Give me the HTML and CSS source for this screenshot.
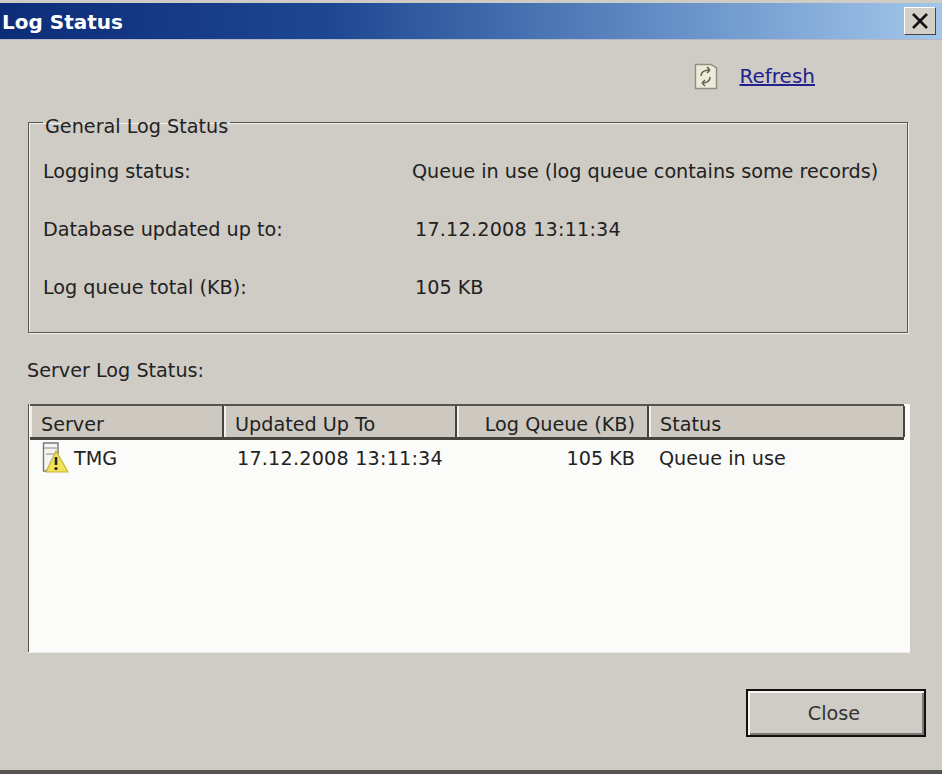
FILE: index.html
```html
<!DOCTYPE html>
<html lang="en">
<head>
  <meta charset="UTF-8">
  <title>Log Status</title>
  <link rel="stylesheet" href="styles.css">
</head>
<body>
  <div class="dialog">
    <div class="titlebar">
      <span class="title">Log Status</span>
      <button class="close-x" aria-label="Close">
        <svg width="18" height="16" viewBox="0 0 18 16"><path d="M2 1 L16 15 M16 1 L2 15" stroke="#111" stroke-width="2.6" fill="none"/></svg>
      </button>
    </div>

    <div class="toolbar">
      <svg class="refresh-icon" width="24" height="27" viewBox="0 0 24 27">
        <path d="M1.5 1.5 H17 L22.5 5 V25.5 H1.5 Z" fill="#ecebd8" stroke="#8f8f80" stroke-width="1.4"/>
        <path d="M7 13 C7 8 11 7 16 7 M16 7 L13 4 M16 7 L13 10" stroke="#5d6250" stroke-width="1.5" fill="none"/>
        <path d="M16 14 C16 19 12 20 8 20 M8 20 L11 17 M8 20 L11 23" stroke="#5d6250" stroke-width="1.5" fill="none"/>
      </svg>
      <a class="refresh-link" href="#">Refresh</a>
    </div>

    <fieldset class="group">
      <legend>General Log Status</legend>
      <div class="status-grid">
        <span>Logging status:</span>
        <span>Queue in use (log queue contains some records)</span>
        <span>Database updated up to:</span>
        <span class="val date">17.12.2008 13:11:34</span>
        <span>Log queue total (KB):</span>
        <span class="val">105 KB</span>
      </div>
    </fieldset>

    <div class="section-label">Server Log Status:</div>

    <div class="list">
      <div class="list-head">
        <div class="col col-server">Server</div>
        <div class="col col-updated">Updated Up To</div>
        <div class="col col-queue">Log Queue (KB)</div>
        <div class="col col-status">Status</div>
      </div>
      <div class="list-row">
        <div class="cell cell-server">
          <svg width="27" height="32" viewBox="0 0 27 32">
            <path d="M1.5 1 H16 V12 L8 29 H1.5 Z" fill="#f4f4f0" stroke="#77777a" stroke-width="1.4"/>
            <path d="M2 6 H15 M4 12 H13" stroke="#8a8a8a" stroke-width="1.2"/>
            <path d="M14 9 L26 30 H4 Z" fill="#f1e25a" stroke="#c4b23c" stroke-width="1.2"/>
            <path d="M14 15 V23" stroke="#2a2410" stroke-width="2.6"/>
            <circle cx="14" cy="26.5" r="1.6" fill="#2a2410"/>
          </svg>
          <span>TMG</span>
        </div>
        <div class="cell cell-updated date">17.12.2008 13:11:34</div>
        <div class="cell cell-queue">105 KB</div>
        <div class="cell cell-status">Queue in use</div>
      </div>
    </div>

    <div class="footer">
      <button class="close-btn">Close</button>
    </div>
  </div>
</body>
</html>
```

FILE: styles.css
```css
* {
  margin: 0;
  padding: 0;
  box-sizing: border-box;
}

body {
  background: #cfcbc5;
  font-family: "DejaVu Sans", sans-serif;
  font-size: 19.2px;
  color: #222;
  overflow: hidden;
}

.dialog {
  display: flex;
  flex-direction: column;
  width: 942px;
  height: 774px;
  padding-top: 3px;
  border-bottom: 4px solid #55544f;
  background: #cfcbc5;
}

.titlebar {
  display: flex;
  align-items: center;
  justify-content: space-between;
  flex-shrink: 0;
  height: 37px;
  padding: 0 6px 0 2px;
  background: linear-gradient(90deg, #0d2c78 0%, #1e4792 35%, #6d97cc 75%, #a4c6ea 100%);
  border-bottom: 1px solid #b5b8c4;
}

.title {
  padding-top: 2px;
  color: #fff;
  font-size: 20px;
  font-weight: bold;
}

.close-x {
  display: flex;
  align-items: center;
  justify-content: center;
  width: 32px;
  height: 28px;
  background: #d4d0c8;
  border: 1px solid;
  border-color: #fff #444 #444 #fff;
}

.toolbar {
  display: flex;
  align-items: center;
  justify-content: flex-end;
  flex-shrink: 0;
  gap: 21px;
  height: 67px;
  padding: 5px 127px 0 0;
}

.refresh-link {
  color: #22228c;
  font-size: 20px;
  text-decoration: underline;
  text-decoration-thickness: 2px;
}

.group {
  flex-shrink: 0;
  height: 226px;
  margin: 0 34px 0 28px;
  padding: 22px 14px 0 14px;
  border: 1px solid #55544f;
  box-shadow: 1px 1px 0 #f2f0ea, inset 1px 1px 0 #f2f0ea;
}

.group legend {
  padding: 8px 2px 0;
}

.status-grid {
  display: grid;
  grid-template-columns: 369px 1fr;
  grid-auto-rows: 58px;
  white-space: nowrap;
}

.val {
  padding-left: 3px;
}

.date {
  letter-spacing: 0.2px;
}

.section-label {
  flex-shrink: 0;
  margin: 26px 0 0 27px;
  height: 45px;
}

.list {
  display: flex;
  flex-direction: column;
  flex-shrink: 0;
  height: 248px;
  margin: 0 32px 0 28px;
  padding: 0 0 0 1px;
  background: #fbfbfa;
  border-left: 1px solid #55544f;
  box-shadow: 0 1px 0 #eeece6;
}

.list-head,
.list-row {
  display: grid;
  grid-template-columns: 194px 233px 192px 256px;
}

.list-head {
  height: 36px;
  margin-right: 6px;
  background: #cdc9c1;
  border-top: 2px solid #55544f;
  border-bottom: 3px solid #45443f;
}

.col {
  display: flex;
  align-items: center;
  padding-top: 6px;
  padding-left: 9px;
  border-left: 2px solid #f2f0ea;
  border-right: 2px solid #45443f;
  white-space: nowrap;
}

.col-queue {
  justify-content: flex-end;
  padding-right: 12px;
}

.list-row {
  margin-top: 1px;
  margin-right: 6px;
  white-space: nowrap;
}

.cell {
  height: 34px;
  display: flex;
  align-items: center;
}

.cell-server {
  gap: 5px;
  padding-left: 12px;
}

.cell-updated {
  padding-left: 13px;
}

.cell-queue {
  justify-content: flex-end;
  padding-right: 14px;
}

.cell-status {
  padding-left: 10px;
}

.footer {
  display: flex;
  justify-content: flex-end;
  padding: 37px 16px 0 0;
}

.close-btn {
  width: 180px;
  height: 48px;
  padding-right: 4px;
  background: #cfcbc5;
  border: 2px solid #111;
  box-shadow: inset 2px 2px 0 #f6f4ee, inset -2px -2px 0 #7c7a74;
  font-family: inherit;
  font-size: 19.2px;
  color: #333;
}
```
